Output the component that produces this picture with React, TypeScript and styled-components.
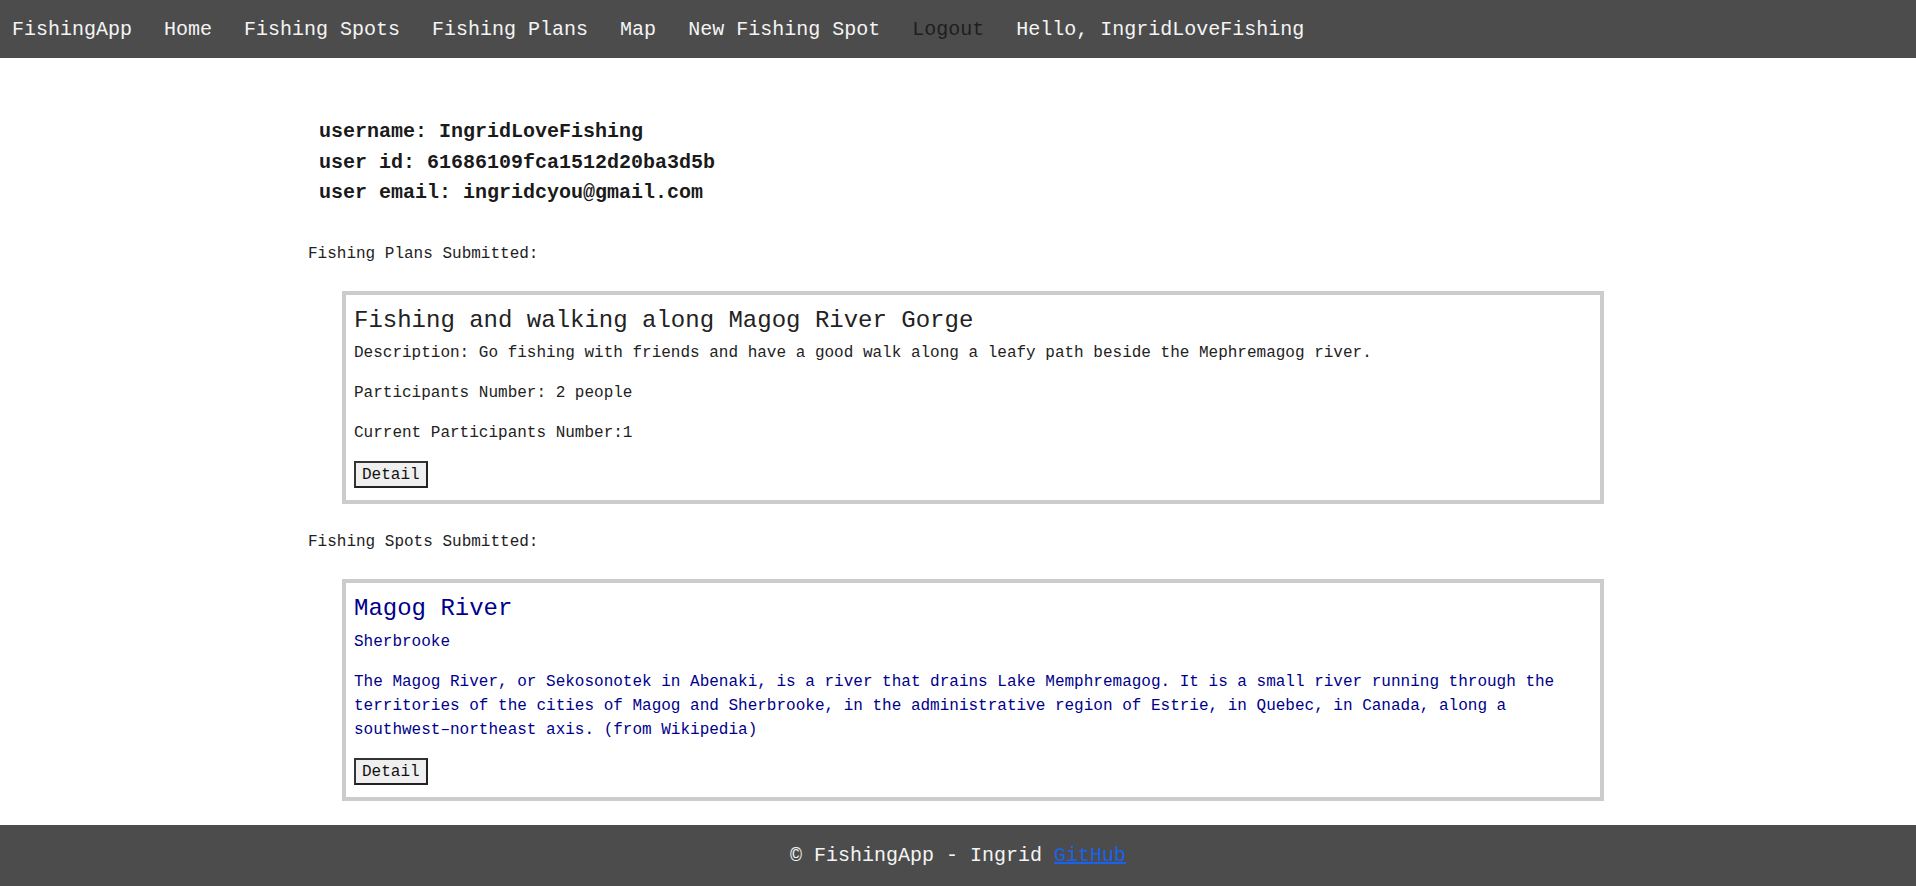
import React from "react";
import styled, { createGlobalStyle } from "styled-components";

const GlobalStyle = createGlobalStyle`
  html, body {
    margin: 0;
    padding: 0;
    background: #ffffff;
  }
  body {
    font-family: "Liberation Mono", "Courier New", monospace;
    font-size: 16px;
    line-height: 1.5;
    color: #222222;
  }
  * { box-sizing: border-box; }
`;

const Page = styled.div`
  display: flex;
  flex-direction: column;
  min-height: 100vh;
`;

const NavBar = styled.nav`
  display: flex;
  align-items: center;
  gap: 32px;
  height: 58px;
  padding: 2px 0 0 12px;
  background: #4c4c4c;
`;

const NavLink = styled.a<{ $muted?: boolean }>`
  font-size: 20px;
  line-height: 30px;
  color: ${(p) => (p.$muted ? "#1e1e1e" : "#f4f4f4")};
  text-decoration: none;
  white-space: nowrap;
  cursor: pointer;
`;

const NavGreeting = styled.span`
  font-size: 20px;
  line-height: 30px;
  color: #f4f4f4;
  white-space: nowrap;
`;

const Main = styled.main`
  flex: 1;
  width: 1300px;
  margin: 0 auto;
  padding: 59px 0 22px;
`;

const UserInfo = styled.div`
  padding-left: 11px;
  font-size: 20px;
  font-weight: bold;
  line-height: 30.5px;
  color: #1a1a1a;
`;

const InfoLine = styled.div``;

const SectionLabel = styled.div<{ $first?: boolean }>`
  margin: ${(p) => (p.$first ? "33px" : "26px")} 0 25px;
  font-size: 16px;
  line-height: 24px;
  color: #222222;
`;

const Card = styled.div<{ $tone?: "plain" | "spot" }>`
  margin: 0 4px 0 34px;
  padding: 12px 8px 12px;
  border: 4px solid #cccccc;
  color: ${(p) => (p.$tone === "spot" ? "#00008b" : "#222222")};
`;

const CardTitle = styled.h2`
  margin: 0 0 6px;
  font-size: 24px;
  font-weight: normal;
  line-height: 28.8px;
`;

const CardText = styled.p`
  margin: 0 0 16px;
  font-size: 16px;
  line-height: 24px;
`;

const DetailButton = styled.button`
  display: block;
  margin-top: 3px;
  height: 27px;
  padding: 0 6px;
  font-family: "Liberation Mono", "Courier New", monospace;
  font-size: 16px;
  line-height: 20px;
  color: #111111;
  background: #efefef;
  border: 2px solid #333333;
  border-right-color: #222222;
  border-bottom-color: #222222;
  cursor: pointer;
`;

const Footer = styled.footer`
  display: flex;
  align-items: center;
  justify-content: center;
  height: 61px;
  padding-top: 1px;
  background: #4c4c4c;
  color: #f4f4f4;
  font-size: 20px;
  line-height: 30px;
`;

const FooterLink = styled.a`
  color: #1a62e8;
  text-decoration: underline;
`;

const navItems = [
  "FishingApp",
  "Home",
  "Fishing Spots",
  "Fishing Plans",
  "Map",
  "New Fishing Spot",
];

export default function App() {
  return (
    <>
      <GlobalStyle />
      <Page>
        <NavBar>
          {navItems.map((item) => (
            <NavLink key={item}>{item}</NavLink>
          ))}
          <NavLink $muted>Logout</NavLink>
          <NavGreeting>Hello, IngridLoveFishing</NavGreeting>
        </NavBar>

        <Main>
          <UserInfo>
            <InfoLine>username: IngridLoveFishing</InfoLine>
            <InfoLine>user id: 61686109fca1512d20ba3d5b</InfoLine>
            <InfoLine>user email: ingridcyou@gmail.com</InfoLine>
          </UserInfo>

          <SectionLabel $first>Fishing Plans Submitted:</SectionLabel>
          <Card>
            <CardTitle>Fishing and walking along Magog River Gorge</CardTitle>
            <CardText>
              Description: Go fishing with friends and have a good walk along a
              leafy path beside the Mephremagog river.
            </CardText>
            <CardText>Participants Number: 2 people</CardText>
            <CardText>Current Participants Number:1</CardText>
            <DetailButton>Detail</DetailButton>
          </Card>

          <SectionLabel>Fishing Spots Submitted:</SectionLabel>
          <Card $tone="spot">
            <CardTitle>Magog River</CardTitle>
            <CardText>Sherbrooke</CardText>
            <CardText>
              The Magog River, or Sekosonotek in Abenaki, is a river that drains
              Lake Memphremagog. It is a small river running through the
              territories of the cities of Magog and Sherbrooke, in the
              administrative region of Estrie, in Quebec, in Canada, along a
              southwest–northeast axis. (from Wikipedia)
            </CardText>
            <DetailButton>Detail</DetailButton>
          </Card>
        </Main>

        <Footer>
          <span>
            © FishingApp - Ingrid <FooterLink>GitHub</FooterLink>
          </span>
        </Footer>
      </Page>
    </>
  );
}
